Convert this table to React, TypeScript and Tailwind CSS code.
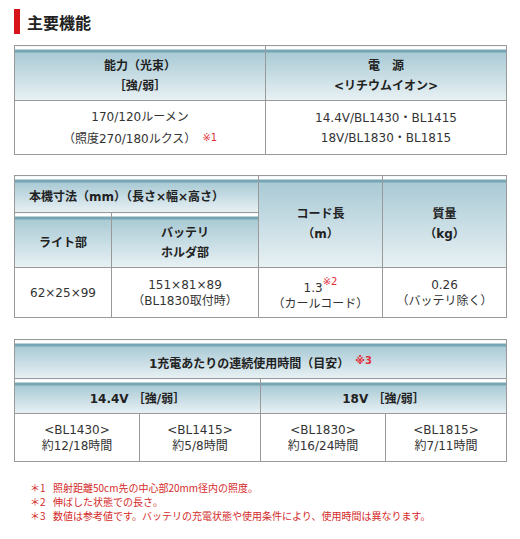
import React from 'react';

const th =
  'border border-[#999] bg-[linear-gradient(to_bottom,#fff_0,#fff_3px,#76a5b3_3px,#76a5b3_6px,#a9cad5_6px,#e8f1f4_100%)] font-bold text-center align-middle pt-[5px] leading-[20px] text-[#222]';
const td = 'border border-[#999] text-center align-middle text-[#333]';

const Note = ({ n }: { n: string }) => (
  <span className="text-[10px] text-[#e0303a] relative">{n}</span>
);

const notes = [
  ['＊1', '照射距離50cm先の中心部20mm径内の照度。'],
  ['＊2', '伸ばした状態での長さ。'],
  ['＊3', '数値は参考値です。バッテリの充電状態や使用条件により、使用時間は異なります。'],
];

export default function App() {
  return (
    <div className="w-[520px] h-[539px] bg-white px-[14px] pt-[9px] text-[12px] font-['DejaVu_Sans','Noto_Sans_CJK_JP',sans-serif]">
      {/* title */}
      <div className="flex items-center h-[25px]">
        <div className="w-[6px] h-[25px] bg-[#d7141a]" />
        <h2 className="ml-[7px] text-[16px] font-bold text-[#222] font-['Noto_Sans_CJK_JP',sans-serif]">主要機能</h2>
      </div>

      {/* table 1 */}
      <table className="mt-[11px] w-[492px] table-fixed border-collapse border border-[#999]">
        <colgroup>
          <col className="w-[251px]" />
          <col className="w-[241px]" />
        </colgroup>
        <tbody>
          <tr>
            <th className={`${th} h-[55px]`}>
              能力（光束）
              <br />
              ［強/弱］
            </th>
            <th className={`${th} h-[55px]`}>
              電　源
              <br />
              &lt;リチウムイオン&gt;
            </th>
          </tr>
          <tr>
            <td className={`${td} h-[54px] leading-[20px]`}>
              170/120ルーメン
              <br />
              （照度270/180ルクス）
              <span className="ml-[6px] align-[2px]">
                <Note n="※1" />
              </span>
            </td>
            <td className={`${td} h-[54px] leading-[20px]`}>
              14.4V/BL1430・BL1415
              <br />
              18V/BL1830・BL1815
            </td>
          </tr>
        </tbody>
      </table>

      {/* table 2 */}
      <table className="mt-[20px] w-[492px] table-fixed border-collapse border border-[#999]">
        <colgroup>
          <col className="w-[97px]" />
          <col className="w-[147px]" />
          <col className="w-[124px]" />
          <col className="w-[124px]" />
        </colgroup>
        <tbody>
          <tr>
            <th colSpan={2} className={`${th} h-[37px] !text-left pl-[14px]`}>
              本機寸法（mm）（長さ×幅×高さ）
            </th>
            <th rowSpan={2} className={th}>
              コード長
              <br />
              （m）
            </th>
            <th rowSpan={2} className={th}>
              質量
              <br />
              （kg）
            </th>
          </tr>
          <tr>
            <th className={`${th} h-[55px]`}>ライト部</th>
            <th className={`${th} h-[55px]`}>
              バッテリ
              <br />
              ホルダ部
            </th>
          </tr>
          <tr>
            <td className={`${td} h-[50px] leading-[16px]`}>62×25×99</td>
            <td className={`${td} h-[50px] leading-[16px]`}>
              151×81×89
              <br />
              （BL1830取付時）
            </td>
            <td className={`${td} h-[50px] leading-[16px]`}>
              1.3
              <span className="align-[7px]">
                <Note n="※2" />
              </span>
              <br />
              （カールコード）
            </td>
            <td className={`${td} h-[50px] leading-[16px]`}>
              0.26
              <br />
              （バッテリ除く）
            </td>
          </tr>
        </tbody>
      </table>

      {/* table 3 */}
      <table className="mt-[21px] w-[492px] table-fixed border-collapse border border-[#999]">
        <colgroup>
          <col className="w-[125px]" />
          <col className="w-[121px]" />
          <col className="w-[125px]" />
          <col className="w-[121px]" />
        </colgroup>
        <tbody>
          <tr>
            <th colSpan={4} className={`${th} h-[39px]`}>
              1充電あたりの連続使用時間（目安）
              <span className="ml-[6px] align-[4px]">
                <Note n="※3" />
              </span>
            </th>
          </tr>
          <tr>
            <th colSpan={2} className={`${th} h-[35px]`}>
              14.4V ［強/弱］
            </th>
            <th colSpan={2} className={`${th} h-[35px]`}>
              18V ［強/弱］
            </th>
          </tr>
          <tr>
            {[
              ['<BL1430>', '約12/18時間'],
              ['<BL1415>', '約5/8時間'],
              ['<BL1830>', '約16/24時間'],
              ['<BL1815>', '約7/11時間'],
            ].map(([a, b]) => (
              <td key={a} className={`${td} h-[48px] leading-[16px]`}>
                {a}
                <br />
                {b}
              </td>
            ))}
          </tr>
        </tbody>
      </table>

      {/* footnotes */}
      <div className="mt-[19px] pl-[16px] text-[10px] leading-[14px] text-[#d42a2a] font-['Noto_Sans_CJK_JP',sans-serif]">
        {notes.map(([k, v]) => (
          <div key={k} className="flex">
            <span className="w-[23px]">{k}</span>
            <span>{v}</span>
          </div>
        ))}
      </div>
    </div>
  );
}
